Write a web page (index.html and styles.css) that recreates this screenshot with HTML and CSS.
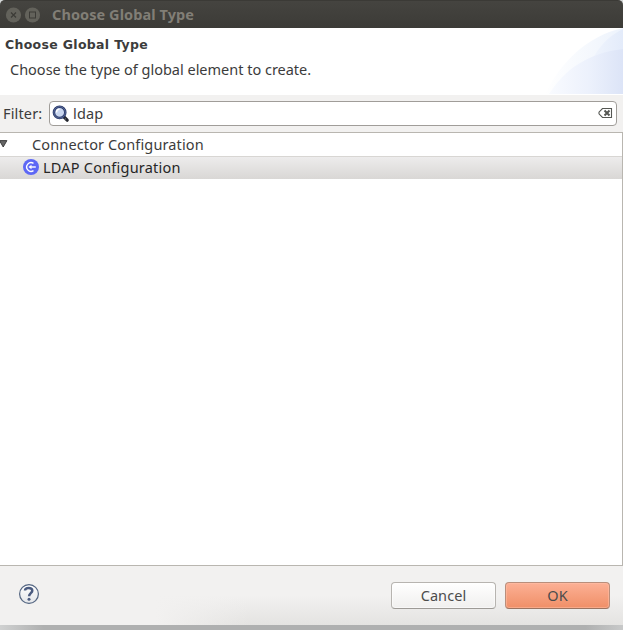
FILE: index.html
```html
<!DOCTYPE html>
<html lang="en">
<head>
<meta charset="utf-8">
<title>Choose Global Type</title>
<link rel="stylesheet" href="styles.css">
</head>
<body>
<div class="dialog">
  <div class="titlebar">
    <svg class="controls" width="36" height="18" viewBox="0 0 36 18">
      <circle cx="8.5" cy="9" r="7.6" fill="#63625b"/>
      <circle cx="27.5" cy="9" r="7.6" fill="#63625b"/>
      <path d="M6 6.5l5 5M11 6.5l-5 5" stroke="#3c3b37" stroke-width="1.2"/>
      <rect x="24.5" y="6" width="6" height="6" fill="none" stroke="#3c3b37"/>
    </svg>
    <span class="title">Choose Global Type</span>
  </div>
  <header class="banner">
    <div class="banner-text">
      <h1>Choose Global Type</h1>
      <p>Choose the type of global element to create.</p>
    </div>
    <svg class="swoosh" width="78" height="66" viewBox="0 0 78 66">
      <defs>
        <linearGradient id="outer" x1="0" x2="1"><stop offset="0" stop-color="#fff"/><stop offset="1" stop-color="#edf3fc"/></linearGradient>
        <linearGradient id="side" x1="0" x2="1"><stop offset="0" stop-color="#f4f8fe"/><stop offset="1" stop-color="#e3ebfa"/></linearGradient>
        <linearGradient id="inner" x1="0" x2="1"><stop offset="0" stop-color="#f9fbff"/><stop offset=".55" stop-color="#ecf1fc"/><stop offset="1" stop-color="#dce4f7"/></linearGradient>
      </defs>
      <path d="M0 66C16 34 42 8 78 0V66Z" fill="url(#outer)"/>
      <path d="M36 66C42 34 55 12 78 1V66Z" fill="url(#side)"/>
      <path d="M4 66C20 41 43 25 78 21V66Z" fill="url(#inner)"/>
    </svg>
  </header>
  <div class="filter">
    <label for="query"><span>Filter:</span></label>
    <div class="search">
      <svg width="18" height="18" viewBox="0 0 18 18">
        <path d="M12 12l3.2 3.2" stroke="#24262e" stroke-width="3.2" stroke-linecap="round"/>
        <circle cx="7.6" cy="7.4" r="5.7" fill="#c9d6ef" stroke="#273766" stroke-width="2.5"/>
        <circle cx="7.6" cy="7.4" r="5.7" fill="none" stroke="#7382b4" stroke-width=".7"/>
        <path d="M4.5 7.5a3.2 3.2 0 0 1 3-3.3" fill="none" stroke="#fff" stroke-width="1.3"/>
        <path d="M12.6 14.6l1.2-.9" stroke="#a7abb6" stroke-width=".8"/>
      </svg>
      <span class="query" id="query">ldap</span>
      <svg class="clear" width="15" height="11" viewBox="0 0 15 11">
        <path d="M4.5.5h9v9h-9L1 5.9V4.1Z" fill="#fff" stroke="#555753" stroke-width="1.1"/>
        <path d="M6.5 2.5l5 5M11.5 2.5l-5 5" stroke="#555753" stroke-width="2"/>
      </svg>
    </div>
  </div>
  <div class="tree">
    <div class="row group">
      <svg width="8" height="8" viewBox="0 0 8 8"><path d="M-.5 .6h7.4L3.2 7Z" fill="#666" stroke="#333" stroke-width=".9"/></svg>
      <span>Connector Configuration</span>
    </div>
    <div class="row selected">
      <svg width="16" height="16" viewBox="0 0 16 16">
        <circle cx="8" cy="8" r="8" fill="#5d67f5"/>
        <path d="M10.5 4.3A4.4 4.4 0 1 0 10.5 11.7" fill="none" stroke="#fff" stroke-width="1.4"/>
        <path d="M7.500 8h5.300" stroke="#fff" stroke-width="1.4"/>
        <path d="M5.500 8l3-2.200v4.400Z" fill="#fff"/>
      </svg>
      <span>LDAP Configuration</span>
    </div>
  </div>
  <footer class="actions">
    <svg width="22" height="22" viewBox="0 0 22 22">
      <defs><linearGradient id="help" x2="0" y2="1"><stop stop-color="#fff"/><stop offset="1" stop-color="#e4e6e9"/></linearGradient></defs>
      <circle cx="11" cy="11" r="9.4" fill="url(#help)" stroke="#536581" stroke-width="1.2"/>
      <path d="M7 7.5C7.3 4.3 14.4 4 14.3 7.6C14.2 10.2 11.1 10.1 11.1 13.3" fill="none" stroke="#4c5c80" stroke-width="2.5"/>
      <circle cx="11" cy="16.2" r="1.5" fill="#4c5c80"/>
    </svg>
    <button class="cancel">Cancel</button>
    <button class="ok">OK</button>
  </footer>
  <div class="shadow"></div>
</div>
</body>
</html>
```
FILE: styles.css
```css
* { box-sizing: border-box; }
body { margin: 0; background: #d5d8d8; font: 14.5px/20px "Noto Sans", sans-serif; color: #3c3c3c; }
span { display: block; padding-bottom: 2px; white-space: nowrap; }
svg { display: block; flex: none; }
.dialog { width: 623px; height: 630px; display: flex; flex-direction: column; overflow: hidden; }
.titlebar { height: 28px; flex: none; display: flex; align-items: center; padding: 1px 0 0 5px; gap: 11px; background: linear-gradient(#454440, #3c3b37); border-top: 1px solid #3b3a36; border-radius: 5px 5px 0 0; }
.title { font-weight: bold; letter-spacing: .08px; color: #817e76; }
.banner { height: 67px; flex: none; display: flex; justify-content: space-between; background: #fff; }
.banner-text { padding: 7px 0 0 5px; white-space: nowrap; }
h1 { margin: 0; font: bold 12.5px/20px "DejaVu Sans", sans-serif; letter-spacing: .32px; }
p { margin: 4px 0 0 5px; letter-spacing: -.01px; }
.filter { height: 37px; flex: none; display: flex; align-items: center; padding: 0 6px 0 3px; background: #f2f1f0; letter-spacing: .15px; }
.filter label { width: 46px; }
.search { flex: 1; height: 25px; display: flex; align-items: center; padding: 0 3px; gap: 2px; background: #fff; border: 1px solid #a09d99; border-radius: 4px; }
.search svg:first-child { margin-left: -1px; margin-right: 1px; }
.clear { margin-left: auto; }
.tree { height: 434px; flex: none; background: #fff; border: solid #b9b6b0; border-width: 1px 1px 1px 0; letter-spacing: .13px; }
.row { height: 23px; display: flex; align-items: center; }
.group { gap: 24px; }
.group svg { margin-top: -2px; }
.selected { gap: 4px; padding-left: 23px; color: #262626; background: linear-gradient(#edecec, #d9d7d5); border-top: 1px solid #d8d6d3; letter-spacing: .22px; }
.selected svg { margin-top: -2px; }
.actions { height: 59px; flex: none; display: flex; align-items: center; padding: 0 13px 3px 18px; gap: 9px; background: linear-gradient(90deg, #f2f1f0 25%, #f2f1f000 40%), linear-gradient(#f2f1f0 50%, #e4e3e1); }
.actions svg { margin-right: auto; }
button { width: 105px; height: 27px; margin: 3px 0 0; padding: 0 0 2px; border: 1px solid #b7b4b0; border-bottom-color: #9d9a96; border-radius: 4px; font: inherit; letter-spacing: .1px; color: #4c4c4c; background: linear-gradient(#fff, #f0efee); box-shadow: inset 0 0 0 1px #ffffff80; }
.ok { border-color: #b98e7b; border-bottom-color: #9b735f; background: linear-gradient(#fcb095, #f08f67); box-shadow: inset 0 0 0 1px #ffc1a980; }
.shadow { height: 5px; background: linear-gradient(90deg, #d0d1d1, #afb0b0 7%, #afb0b0 94%, #c8c9c9); }
```
